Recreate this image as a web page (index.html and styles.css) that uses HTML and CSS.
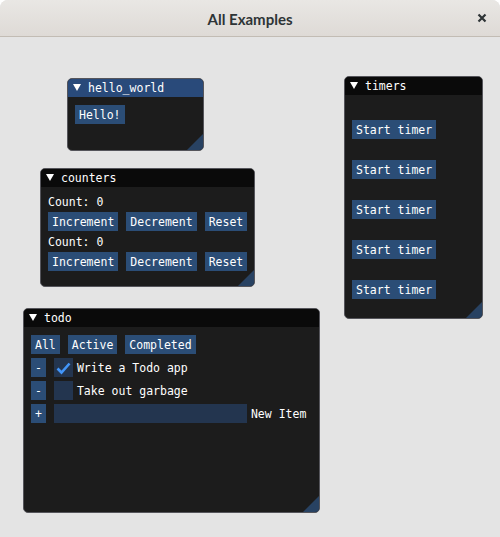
FILE: index.html
```html
<!DOCTYPE html>
<html lang="en">
<head>
<meta charset="utf-8">
<title>All Examples</title>
<link rel="stylesheet" href="styles.css">
</head>
<body>
<div class="app">
  <header class="titlebar">
    <span class="app-title">All Examples</span>
    <span class="close" aria-label="Close">
      <svg width="10" height="10" viewBox="0 0 10 10"><path d="M1.5 1.5 L8.5 8.5 M8.5 1.5 L1.5 8.5" stroke="#2e3436" stroke-width="2.2" stroke-linecap="butt"/></svg>
    </span>
  </header>
  <main class="desktop">
    <section class="win win-hello">
      <div class="win-title active">
        <svg class="arrow" width="8" height="7" viewBox="0 0 8 7"><polygon points="0,0 8,0 4,7" fill="#fff"/></svg>
        <span>hello_world</span>
      </div>
      <div class="win-body">
        <div class="row"><button class="btn">Hello!</button></div>
      </div>
    </section>

    <section class="win win-counters">
      <div class="win-title">
        <svg class="arrow" width="8" height="7" viewBox="0 0 8 7"><polygon points="0,0 8,0 4,7" fill="#fff"/></svg>
        <span>counters</span>
      </div>
      <div class="win-body">
        <div class="text">Count: 0</div>
        <div class="row">
          <button class="btn">Increment</button>
          <button class="btn">Decrement</button>
          <button class="btn">Reset</button>
        </div>
        <div class="text">Count: 0</div>
        <div class="row">
          <button class="btn">Increment</button>
          <button class="btn">Decrement</button>
          <button class="btn">Reset</button>
        </div>
      </div>
    </section>

    <section class="win win-timers">
      <div class="win-title">
        <svg class="arrow" width="8" height="7" viewBox="0 0 8 7"><polygon points="0,0 8,0 4,7" fill="#fff"/></svg>
        <span>timers</span>
      </div>
      <div class="win-body">
        <div class="text"></div>
        <div class="row"><button class="btn">Start timer</button></div>
        <div class="text"></div>
        <div class="row"><button class="btn">Start timer</button></div>
        <div class="text"></div>
        <div class="row"><button class="btn">Start timer</button></div>
        <div class="text"></div>
        <div class="row"><button class="btn">Start timer</button></div>
        <div class="text"></div>
        <div class="row"><button class="btn">Start timer</button></div>
      </div>
    </section>

    <section class="win win-todo">
      <div class="win-title">
        <svg class="arrow" width="8" height="7" viewBox="0 0 8 7"><polygon points="0,0 8,0 4,7" fill="#fff"/></svg>
        <span>todo</span>
      </div>
      <div class="win-body">
        <div class="row">
          <button class="btn">All</button>
          <button class="btn">Active</button>
          <button class="btn">Completed</button>
        </div>
        <div class="row">
          <button class="btn">-</button>
          <span class="check-item">
            <span class="checkbox">
              <svg width="19" height="19" viewBox="0 0 19 19"><path d="M3.5 10.5 L7.5 14.5 L15.5 5.5" fill="none" stroke="#4296fa" stroke-width="2.6" stroke-linejoin="miter"/></svg>
            </span>
            <span class="label">Write a Todo app</span>
          </span>
        </div>
        <div class="row">
          <button class="btn">-</button>
          <span class="check-item">
            <span class="checkbox"></span>
            <span class="label">Take out garbage</span>
          </span>
        </div>
        <div class="row">
          <button class="btn">+</button>
          <span class="input-item">
            <span class="input"></span>
            <span class="label">New Item</span>
          </span>
        </div>
      </div>
    </section>
  </main>
</div>
</body>
</html>
```

FILE: styles.css
```css
html, body {
  margin: 0;
  padding: 0;
  background: #ffffff;
}

.app {
  position: relative;
  width: 500px;
  height: 537px;
  display: flex;
  flex-direction: column;
  border-radius: 8px 8px 0 0;
  overflow: hidden;
  background: #e4e4e4;
}

.titlebar {
  height: 36px;
  flex: none;
  border-bottom: 1px solid #c2bcb4;
  background: linear-gradient(#e9e7e4, #dedad6);
  display: flex;
  align-items: center;
  justify-content: center;
  position: relative;
}

.app-title {
  font-family: "Lato", "Noto Sans", sans-serif;
  font-weight: 700;
  font-size: 15px;
  color: #2e3436;
  margin-top: 1px;
}

.close {
  position: absolute;
  right: 13px;
  top: 13px;
  width: 10px;
  height: 10px;
  display: block;
}

.close svg {
  display: block;
}

.desktop {
  flex: 1;
  background: #e4e4e4;
}

.win {
  position: absolute;
  box-sizing: border-box;
  border: 1px solid #55555b;
  border-radius: 5px;
  background: #1c1c1c;
  overflow: hidden;
  display: flex;
  flex-direction: column;
  font-family: "DejaVu Sans Mono", "Liberation Mono", monospace;
  font-size: 11.5px;
  line-height: 13px;
  color: #ffffff;
}

.win::after {
  content: "";
  position: absolute;
  right: 0;
  bottom: 0;
  width: 16px;
  height: 16px;
  background: #284262;
  clip-path: polygon(100% 0, 100% 100%, 0 100%);
}

.win-hello { left: 67px; top: 78px; width: 137px; height: 73px; }
.win-counters { left: 40px; top: 168px; width: 215px; height: 119px; }
.win-timers { left: 344px; top: 76px; width: 139px; height: 243px; }
.win-todo { left: 23px; top: 308px; width: 297px; height: 205px; }

.win-title {
  flex: none;
  height: 18px;
  box-sizing: border-box;
  padding: 3px 0 0 5px;
  background: #0a0a0a;
  display: flex;
  align-items: flex-start;
  gap: 7px;
  white-space: pre;
}

.win-title.active {
  background: #294a7a;
}

.arrow {
  display: block;
  margin-top: 2px;
  flex: none;
}

.win-body {
  padding: 8px 7px 7px 7px;
  display: flex;
  flex-direction: column;
  gap: 4px;
}

.text {
  height: 13px;
  box-sizing: border-box;
  padding-top: 1px;
  white-space: pre;
}

.row {
  display: flex;
  gap: 8px;
  align-items: flex-start;
}

.btn {
  font: inherit;
  color: #ffffff;
  background: #2b4d76;
  border: none;
  border-radius: 0;
  margin: 0;
  height: 19px;
  padding: 4px 4px 2px 4px;
  box-sizing: border-box;
  white-space: pre;
  display: block;
}

.check-item,
.input-item {
  display: flex;
  gap: 4px;
  align-items: flex-start;
}

.checkbox {
  width: 19px;
  height: 19px;
  background: #23354f;
  display: block;
}

.checkbox svg {
  display: block;
}

.label {
  padding-top: 4px;
  white-space: pre;
}

.input {
  width: 193px;
  height: 19px;
  background: #23354f;
  display: block;
}
```
